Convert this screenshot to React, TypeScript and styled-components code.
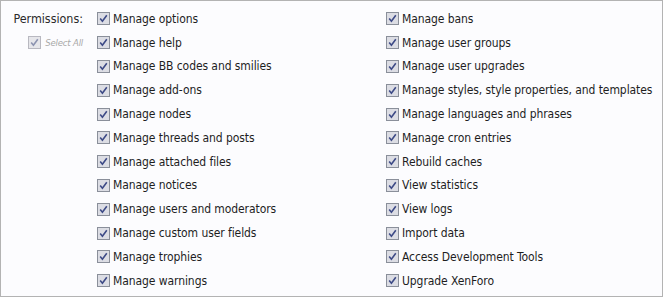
import styled, { createGlobalStyle } from 'styled-components';

const GlobalStyle = createGlobalStyle`
  body {
    margin: 0;
    background: #ffffff;
    font-family: 'DejaVu Sans Condensed', 'DejaVu Sans', sans-serif;
  }
`;

const StyledFrame = styled.div`
  box-sizing: border-box;
  width: 663px;
  height: 297px;
  border: 1px solid #b3b3b3;
  background: #fcfcfe;
  display: grid;
  grid-template-columns: 96px 289px 1fr;
  padding-top: 6px;
`;

const StyledLabelColumn = styled.div`
  display: flex;
  flex-direction: column;
  align-items: flex-end;
  padding-right: 14px;
`;

const StyledLabel = styled.div`
  height: 23.8px;
  line-height: 23.8px;
  font-size: 12.4px;
  color: #2a2a2a;
`;

const StyledColumn = styled.div`
  display: flex;
  flex-direction: column;
`;

interface StyledRowProps {
  $small?: boolean;
}
const StyledRow = styled.label<StyledRowProps>`
  height: 23.8px;
  display: flex;
  align-items: center;
  gap: ${({ $small }) => ($small ? '4px' : '3px')};
  font-size: ${({ $small }) => ($small ? '9.5px' : '12px')};
  letter-spacing: ${({ $small }) => ($small ? '-0.2px' : '-0.08px')};
  font-style: ${({ $small }) => ($small ? 'italic' : 'normal')};
  color: ${({ $small }) => ($small ? '#a8a8a8' : '#1e1e1e')};
  white-space: nowrap;
`;

interface StyledBoxProps {
  $disabled?: boolean;
}
const StyledBox = styled.span<StyledBoxProps>`
  box-sizing: border-box;
  width: 13px;
  height: 13px;
  flex: none;
  border: 1px solid ${({ $disabled }) => ($disabled ? '#b8b8c0' : '#8a8f9a')};
  background: ${({ $disabled }) => ($disabled ? '#e6e6ea' : '#dcdde4')};
  display: flex;
  align-items: center;
  justify-content: center;

  svg {
    display: block;
  }
`;

const Check = ({ disabled }: { disabled?: boolean }) => (
  <StyledBox $disabled={disabled}>
    <svg width="9" height="9" viewBox="0 0 9 9">
      <path
        d="M1.2 4.6 L3.4 7.2 L7.8 1.2"
        fill="none"
        stroke={disabled ? '#8c93b0' : '#3d4a86'}
        strokeWidth="1.6"
      />
    </svg>
  </StyledBox>
);

const leftItems = [
  'Manage options',
  'Manage help',
  'Manage BB codes and smilies',
  'Manage add-ons',
  'Manage nodes',
  'Manage threads and posts',
  'Manage attached files',
  'Manage notices',
  'Manage users and moderators',
  'Manage custom user fields',
  'Manage trophies',
  'Manage warnings',
];

const rightItems = [
  'Manage bans',
  'Manage user groups',
  'Manage user upgrades',
  'Manage styles, style properties, and templates',
  'Manage languages and phrases',
  'Manage cron entries',
  'Rebuild caches',
  'View statistics',
  'View logs',
  'Import data',
  'Access Development Tools',
  'Upgrade XenForo',
];

const App = () => {
  return (
    <>
      <GlobalStyle />
      <StyledFrame>
        <StyledLabelColumn>
          <StyledLabel>Permissions:</StyledLabel>
          <StyledRow $small>
            <Check disabled />
            <span>Select All</span>
          </StyledRow>
        </StyledLabelColumn>
        <StyledColumn>
          {leftItems.map((item) => (
            <StyledRow key={item}>
              <Check />
              <span>{item}</span>
            </StyledRow>
          ))}
        </StyledColumn>
        <StyledColumn>
          {rightItems.map((item) => (
            <StyledRow key={item}>
              <Check />
              <span>{item}</span>
            </StyledRow>
          ))}
        </StyledColumn>
      </StyledFrame>
    </>
  );
};

export default App;
